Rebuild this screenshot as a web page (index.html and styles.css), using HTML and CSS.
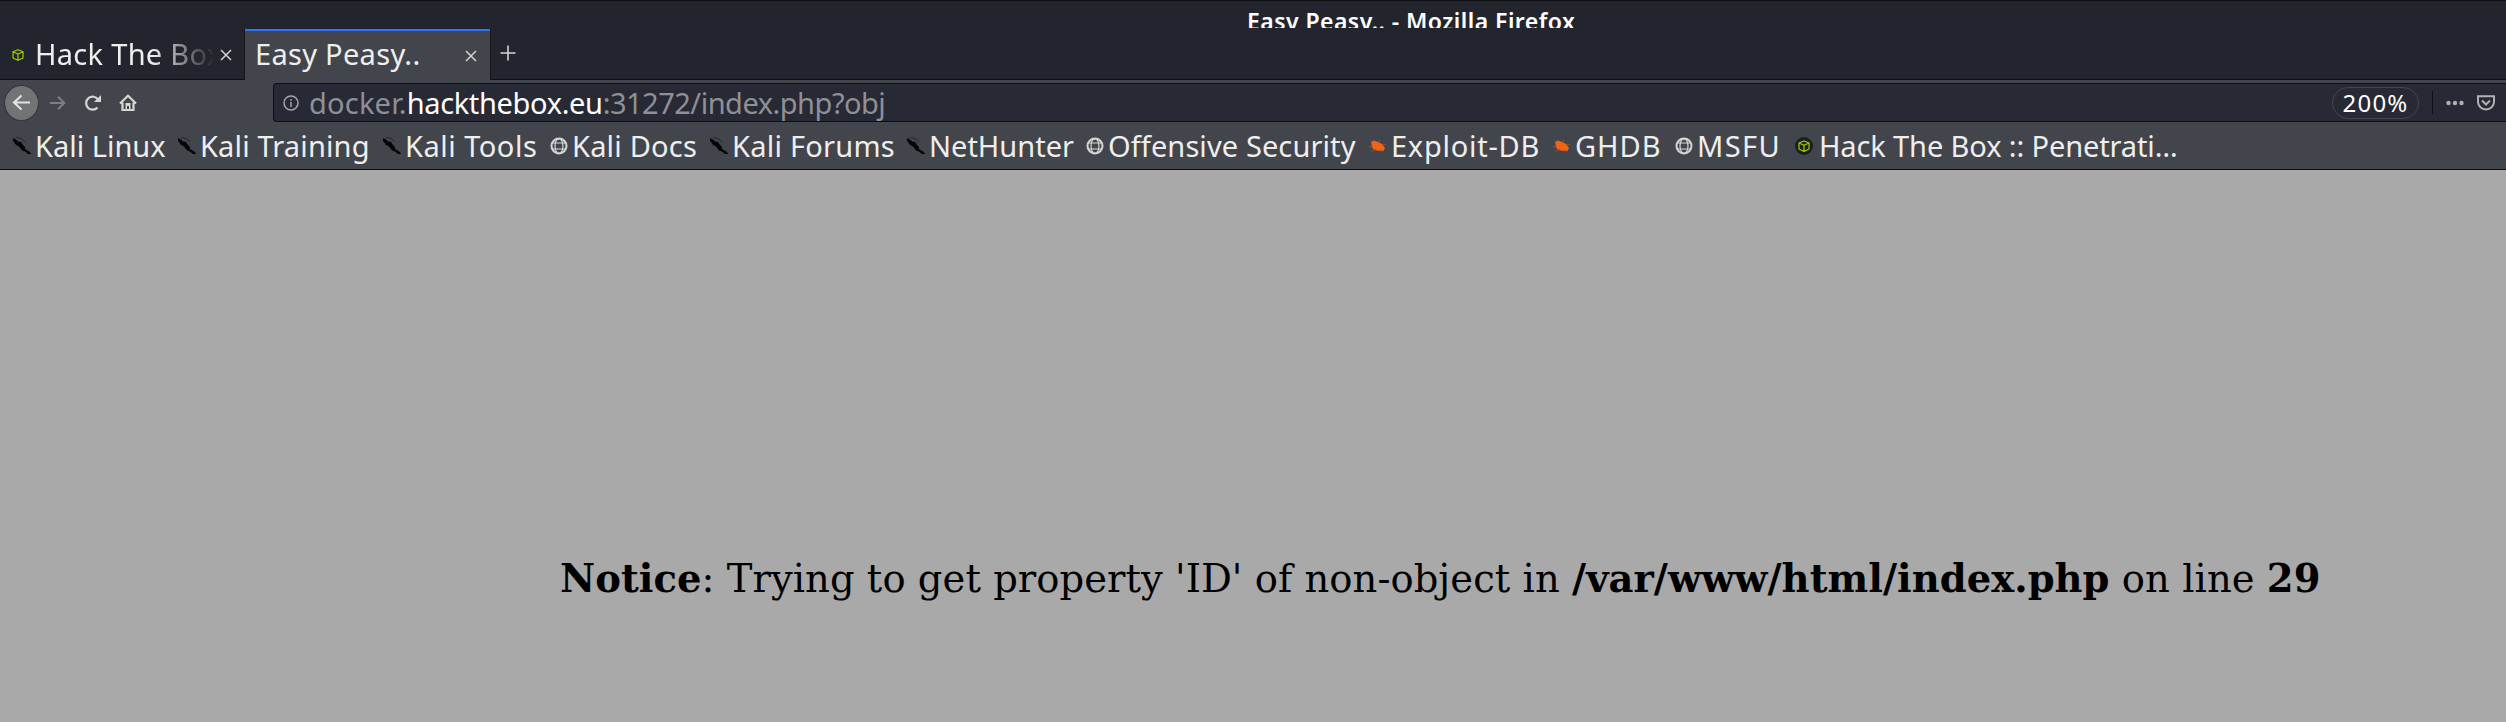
FILE: index.html
```
<!DOCTYPE html>
<html lang="en">
<head>
<meta charset="utf-8">
<title>Easy Peasy.. - Mozilla Firefox</title>
<link rel="stylesheet" href="styles.css">
</head>
<body>
<svg class="defs" width="0" height="0">
  <symbol id="dragon" viewBox="0 0 18 18"><path fill="#050505" d="M0 1l3 1.500 2 2 3 .5 2 3 2 2 0 2 5 3 1 2-3 0-3-2.500-3-1-3-4-3-1.500-2-3-1-1z"/><path fill="none" stroke="#24262a" d="M3 0l6 2 3 3"/></symbol>
  <symbol id="globe" viewBox="0 0 18 18"><g fill="none" stroke="#d6d6d4" stroke-width="1.200"><circle cx="9" cy="9" r="7.500" stroke-width="2"/><ellipse cx="9" cy="9" rx="4" ry="7.400"/><path d="M2 6h14M2 12h14"/></g></symbol>
  <symbol id="bug" viewBox="0 0 18 18"><path fill="#f26411" d="M2 5l3-1.500 4 1.500 4 2 3 4-1 1.500 0 1.500-3-.5-3 .5-5-2-1-2.500z"/><path fill="none" stroke="#a8542c" stroke-width=".8" d="M0 9.500l4 0M2 14l6-1.500M10 6l.5-3M13 8l4-.5M10 13l3 1.500"/></symbol>
  <symbol id="box" viewBox="0 0 18 18"><circle cx="9" cy="9" r="9" fill="#1b1f25"/><path fill="none" stroke="#9fce00" stroke-width="1.200" stroke-linejoin="round" d="M9 4l5 2v6l-5 2.500-5-2.500V6zM4 6l5 2.300L14 6M9 8.300v6"/></symbol>
  <symbol id="cube" viewBox="0 0 12 12"><path fill="none" stroke="#9fce00" stroke-width="1.200" stroke-linejoin="round" d="M6 .8l5 2v6.200l-5 2.300-5-2.300V2.800zM1 2.800l5 2.200 5-2.200M6 5v6.300"/></symbol>
  <symbol id="close" viewBox="0 0 12 12"><path fill="none" stroke="#d4d4d3" stroke-width="1.500" d="M1 1l10 10M11 1L1 11"/></symbol>
</svg>

<header class="titlebar"><div class="window-title">Easy Peasy.. - Mozilla Firefox</div></header>

<nav class="tabs">
  <div class="tab">
    <svg class="favicon"><use href="#cube"/></svg>
    <span class="tab-label faded">Hack The Box</span>
    <svg class="close"><use href="#close"/></svg>
  </div>
  <div class="tab active">
    <span class="tab-label">Easy Peasy..</span>
    <svg class="close"><use href="#close"/></svg>
  </div>
  <svg class="new-tab" viewBox="0 0 16 16"><path d="M8 .5v15M.5 8h15" fill="none" stroke="#d4d4d3" stroke-width="1.600"/></svg>
</nav>

<div class="toolbar">
  <div class="back"><svg viewBox="0 0 20 18"><path d="M19 9H2M10 1.500L2 9l8 7.500"/></svg></div>
  <svg class="nav-icon forward" viewBox="0 0 20 18"><path d="M1 9h16M10 2l7 7-7 7"/></svg>
  <svg class="nav-icon reload" viewBox="0 0 18 18"><path d="M13.500 13.500A6.500 6.500 0 1 1 14 5.500"/><path class="solid" d="M17 1v7h-7z"/></svg>
  <svg class="nav-icon home" viewBox="0 0 18 18"><path d="M1 9.500L9 1.800l8 7.700M3.500 8.500V16h11V8.500"/><path class="solid" d="M6.500 9h5v7h-1.500v-4h-2v4h-1.500z"/></svg>
  <div class="urlbar">
    <svg class="info" viewBox="0 0 16 16"><circle cx="8" cy="8" r="7"/><path d="M8 7v5M8 4v1.700"/></svg>
    <div class="url"><span class="sub">docker.</span><span class="domain">hackthebox.eu</span><span class="path">:31272/index.php?obj</span></div>
    <div class="zoom">200%</div>
    <div class="separator"></div>
    <svg class="dots" viewBox="0 0 18 6"><circle cx="2.500" cy="3" r="2.200"/><circle cx="9" cy="3" r="2.200"/><circle cx="15.500" cy="3" r="2.200"/></svg>
    <svg class="pocket" viewBox="0 0 18 16"><path d="M1 1.200h16v5.800a8 7.500 0 0 1-16 0zM5 5.500l4 4 4-4"/></svg>
  </div>
</div>

<nav class="bookmarks">
  <a class="bm linux"><svg><use href="#dragon"/></svg><span>Kali Linux</span></a>
  <a class="bm training"><svg><use href="#dragon"/></svg><span>Kali Training</span></a>
  <a class="bm tools"><svg><use href="#dragon"/></svg><span>Kali Tools</span></a>
  <a class="bm docs"><svg><use href="#globe"/></svg><span>Kali Docs</span></a>
  <a class="bm forums"><svg><use href="#dragon"/></svg><span>Kali Forums</span></a>
  <a class="bm nethunter"><svg><use href="#dragon"/></svg><span>NetHunter</span></a>
  <a class="bm offsec"><svg><use href="#globe"/></svg><span>Offensive Security</span></a>
  <a class="bm exploit"><svg><use href="#bug"/></svg><span>Exploit-DB</span></a>
  <a class="bm ghdb"><svg><use href="#bug"/></svg><span>GHDB</span></a>
  <a class="bm msfu"><svg><use href="#globe"/></svg><span>MSFU</span></a>
  <a class="bm htb"><svg><use href="#box"/></svg><span>Hack The Box :: Penetrati…</span></a>
</nav>

<main class="page"><p class="notice"><b>Notice</b>: Trying to get property 'ID' of non-object in <b>/var/www/html/index.php</b> on line <b>29</b></p></main>
</body>
</html>
```
FILE: styles.css
```
* { box-sizing: border-box; }
body { margin: 0; width: 2506px; height: 722px; overflow: hidden; display: flex; flex-direction: column; background: #a9a9a9; font-family: "Noto Sans", sans-serif; font-size: 29px; color: #eeeeec; white-space: nowrap; }
svg { flex: none; }
.defs { position: absolute; }

.titlebar { height: 28px; flex: none; overflow: hidden; background: #23252e; border-top: 1px solid #0e0f13; padding-left: 1247px; }
.window-title { font-size: 23px; font-weight: 600; letter-spacing: .45px; line-height: 30px; padding-top: 5px; color: #fff; }

.tabs { height: 52px; flex: none; display: flex; background: #23252e; box-shadow: inset 0 -1px #0e0f13; padding-top: 1px; }
.tab { width: 245px; display: flex; align-items: center; padding: 0 13px 0 12px; }
.tab.active { padding-left: 10px; background: #43454c; border-top: 2px solid #2a76ff; box-shadow: -1px 0 #15161b, 1px 0 #15161b; }
.favicon { width: 12px; height: 12px; margin-right: 11px; }
.tab-label { flex: 1; overflow: hidden; line-height: 40px; padding-bottom: 2px; letter-spacing: .3px; }
.tab.active .tab-label { padding-bottom: 3px; }
.faded { -webkit-mask-image: linear-gradient(90deg, #000 65%, transparent); mask-image: linear-gradient(90deg, #000 65%, transparent); }
.close { width: 12px; height: 12px; margin-left: 5px; }
.new-tab { width: 16px; height: 16px; margin: 16px 0 0 10px; }

.toolbar { height: 45px; flex: none; display: flex; align-items: center; background: #43454c; padding-left: 4px; }
.back { width: 35px; height: 36px; border-radius: 50%; background: #727377; border: 1px solid #34353b; display: flex; align-items: center; justify-content: center; }
.back svg { width: 19px; height: 17px; }
.back path { fill: none; stroke: #e4e4e2; stroke-width: 2.200; }
.nav-icon { width: 18px; height: 18px; fill: none; stroke: #d6d6d4; stroke-width: 2.200; }
.nav-icon .solid { fill: #d6d6d4; stroke: none; }
.forward { margin-left: 10px; stroke: #7d7f83; }
.reload { margin-left: 17px; }
.home { margin-left: 17px; }
.urlbar { margin-left: 136px; flex: 1; height: 39px; display: flex; align-items: center; background: #272934; border: 1px solid #0e0f13; border-right: 0; border-radius: 4px 0 0 4px; padding-left: 9px; }
.info { width: 16px; height: 16px; fill: none; stroke: #a3a4a8; stroke-width: 1.500; }
.url { flex: 1; margin-left: 10px; line-height: 36px; color: #8f9095; }
.sub { letter-spacing: .2px; }
.domain { color: #fff; letter-spacing: -.35px; }
.path { letter-spacing: -.5px; }
.zoom { width: 87px; height: 32px; border: 1px solid #43454c; border-radius: 16px; text-align: center; font-size: 24px; letter-spacing: 1.200px; line-height: 30px; color: #fff; }
.separator { width: 1px; height: 23px; background: #0e0f13; margin-left: 13px; }
.dots { width: 18px; height: 6px; margin-left: 13px; fill: #b1b1b3; }
.pocket { width: 18px; height: 16px; margin: 0 11px 0 13px; fill: none; stroke: #b1b1b3; stroke-width: 2; }

.bookmarks { height: 45px; flex: none; display: flex; background: #43454c; border-bottom: 1px solid #0e0f13; padding-left: 13px; }
.bm { flex: none; display: flex; line-height: 42px; }
.bm svg { width: 18px; height: 18px; margin: 12px 4px 0 0; }
.linux { width: 165px; }
.training { width: 205px; letter-spacing: .15px; }
.tools { width: 167px; letter-spacing: .5px; }
.docs { width: 160px; letter-spacing: .2px; }
.forums { width: 197px; letter-spacing: .25px; }
.nethunter { width: 179px; }
.offsec { width: 283px; letter-spacing: .1px; }
.exploit { width: 184px; letter-spacing: .75px; }
.ghdb { width: 122px; letter-spacing: 1px; }
.msfu { width: 120px; letter-spacing: 1.400px; }
.htb { width: 385px; letter-spacing: -.12px; }
.htb svg { margin-right: 6px; }

.page { flex: 1; background: #a9a9a9; color: #000; font-family: "DejaVu Serif", serif; font-size: 38.500px; }
.notice { margin: 0; padding: 385px 0 0 560px; line-height: 48px; letter-spacing: .04px; }
```
